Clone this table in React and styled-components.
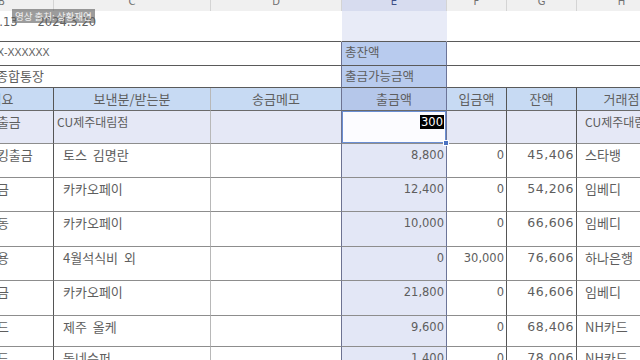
import React from 'react';
import styled, { createGlobalStyle } from 'styled-components';

const GlobalStyle = createGlobalStyle`
  html, body { margin: 0; padding: 0; background: #fff; }
  body { width: 640px; height: 360px; overflow: hidden; }
`;

const COLS = '104px 157px 131px 105px 60px 70px 90px';
const KR = `"Noto Sans CJK KR", "Noto Sans", sans-serif`;
const NUM = `"DejaVu Sans", sans-serif`;

// colours of the vertical rules, one per column (right edge)
const RULES = ['#555', '#b8b8b8', '#6d7392', '#6c7598', '#555', '#555', '#555'];
const FOCUS = '#e5e8f6';
const HEAD = '#c7daf3';
const HEAD_E = '#b5c7ea';
const BLUE = '#b8cbee';

const Screen = styled.div`
  position: relative;
  width: 640px;
  height: 360px;
  overflow: hidden;
  background: #fff;
  font-family: ${KR};
  color: #5e5e5e;
`;

const Sheet = styled.div`
  margin-left: -50px;
  width: 717px;
`;

const Row = styled.div`
  display: grid;
  grid-template-columns: ${COLS};
  height: ${p => p.$h}px;
`;

const Letter = styled.div`
  background: ${p => (p.$on ? '#d7dcef' : '#f0f0f0')};
  border-right: 1px solid #d4d4d4;
  color: ${p => (p.$on ? '#3d4f86' : '#707070')};
  font: 10px/10px ${NUM};
  text-align: center;
  overflow: hidden;
  span { display: block; margin-top: -3px; }
`;

const Cell = styled.div`
  grid-column: span ${p => p.$span || 1};
  background: ${p => p.$bg || '#fff'};
  border-right: 1px solid ${p => p.$line || 'transparent'};
  border-bottom: 1px solid ${p => p.$under || '#8d8d8d'};
  padding: ${p => p.$pt ?? 2}px ${p => p.$pr ?? 3}px 0 ${p => p.$pl ?? 3}px;
  font-size: ${p => p.$fs || 13}px;
  line-height: 18px;
  white-space: pre;
  overflow: hidden;
`;

const HeadCell = styled(Cell)`
  text-align: center;
  padding: 0;
  line-height: 22px;
  border-bottom-color: #6a6a6a;
`;

const NumCell = styled(Cell)`
  text-align: right;
  font-family: ${NUM};
  font-size: ${p => p.$fs || 11.5}px;
  letter-spacing: ${p => p.$ls || 0}px;
  padding-right: 2px;
`;

const ActiveCell = styled(NumCell)`
  position: relative;
  overflow: visible;
  background: #fcfcff;
  box-shadow: inset 0 0 0 1px #6a8ed3;
  z-index: 1;
  &::after {
    content: '';
    position: absolute;
    right: -3px;
    bottom: -3px;
    width: 4px;
    height: 4px;
    background: #4b73c2;
    border: 1px solid #fff;
  }
`;

const Sel = styled.span`
  display: inline-block;
  background: #000;
  color: #fff;
  line-height: 14px;
  padding: 0 1px;
`;

const Stamp = styled.div`
  position: absolute;
  left: 12px;
  top: 9px;
  padding: 0 3px;
  background: rgba(96, 96, 96, 0.62);
  color: #f2f2f2;
  font: 9.5px/14px ${KR};
  white-space: nowrap;
`;

const Dates = styled.div`
  display: flex;
  gap: 20px;
  font: 11.5px/18px ${NUM};
  color: #606060;
`;

const letters = ['B', 'C', 'D', 'E', 'F', 'G', 'H'];
const heads = ['적요', '보낸분/받는분', '송금메모', '출금액', '입금액', '잔액', '거래점'];

const rows = [
  { h: 33, a: '가맹점출금', c: 'CU제주대림점', out: '300', inc: '', bal: '', br: 'CU제주대림점', active: true },
  { h: 34, a: '오픈뱅킹출금', c: '토스  김명란', out: '8,800', inc: '0', bal: '45,406', br: '스타뱅' },
  { h: 34, a: '간편송금', c: '카카오페이', out: '12,400', inc: '0', bal: '54,206', br: '임베디' },
  { h: 35, a: '자금이동', c: '카카오페이', out: '10,000', inc: '0', bal: '66,606', br: '임베디' },
  { h: 34, a: '카드사용', c: '4월석식비  외', out: '0', inc: '30,000', bal: '76,606', br: '하나은행' },
  { h: 35, a: '현금출금', c: '카카오페이', out: '21,800', inc: '0', bal: '46,606', br: '임베디' },
  { h: 31, a: '체크카드', c: '제주  올케', out: '9,600', inc: '0', bal: '68,406', br: 'NH카드' },
  { h: 34, a: '체크카드', c: '동네슈퍼', out: '1,400', inc: '0', bal: '78,006', br: 'NH카드' },
];

export default function App() {
  return (
    <Screen>
      <GlobalStyle />
      <Sheet>
        <Row $h={11}>
          {letters.map(l => (
            <Letter key={l} $on={l === 'E'}><span>{l}</span></Letter>
          ))}
        </Row>

        <Row $h={31}>
          <Cell $span={3} $pl={9} $pt={2} $under="#5a5a5a">
            <Dates><span>2024.4.13</span><span>2024.5.20</span></Dates>
          </Cell>
          <Cell $bg="#e8ebf7" $under="#5a5a5a" />
          <Cell $span={3} $under="#5a5a5a" />
        </Row>

        <Row $h={24}>
          <Cell $span={3} $pl={33} $pt={1} $fs={10.5} $line={RULES[2]} $under="#5a5a5a"
            style={{ fontFamily: '"Liberation Sans", sans-serif' }}>XXX-XXXXXX</Cell>
          <Cell $bg={BLUE} $line={RULES[3]} $under="#5a5a5a" $pt={1} $fs={12.5}>총잔액</Cell>
          <Cell $span={3} $under="#5a5a5a" />
        </Row>

        <Row $h={22}>
          <Cell $span={3} $pl={46} $pt={1} $line={RULES[2]} $under="#5a5a5a">종합통장</Cell>
          <Cell $bg={BLUE} $line={RULES[3]} $under="#5a5a5a" $pt={1} $fs={12.5}>출금가능금액</Cell>
          <Cell $span={3} $under="#5a5a5a" />
        </Row>

        <Row $h={23}>
          {heads.map((t, i) => (
            <HeadCell key={t} $bg={i === 3 ? HEAD_E : HEAD} $line={RULES[i]}>{t}</HeadCell>
          ))}
        </Row>

        {rows.map((r, i) => {
          const bg = r.active ? FOCUS : '#fff';
          return (
            <Row key={i} $h={r.h}>
              <Cell $bg={bg} $pl={11} $line={RULES[0]}>{r.a}</Cell>
              <Cell $bg={bg} $pl={r.active ? 3 : 9} $fs={r.active ? 12 : 13} $line={RULES[1]}>{r.c}</Cell>
              <Cell $bg={bg} $line={RULES[2]} />
              {r.active ? (
                <ActiveCell $line={RULES[3]}><Sel>{r.out}</Sel></ActiveCell>
              ) : (
                <NumCell $bg="#e3e7f6" $line={RULES[3]}>{r.out}</NumCell>
              )}
              <NumCell $bg={bg} $line={RULES[4]}>{r.inc}</NumCell>
              <NumCell $bg={bg} $line={RULES[5]} $fs={12.5} $ls={0.5}>{r.bal}</NumCell>
              <Cell $bg={bg} $pl={8} $fs={r.active ? 12 : 13} $line={RULES[6]}>{r.br}</Cell>
            </Row>
          );
        })}
      </Sheet>
      <Stamp>영상 출처: 상황재연</Stamp>
    </Screen>
  );
}
